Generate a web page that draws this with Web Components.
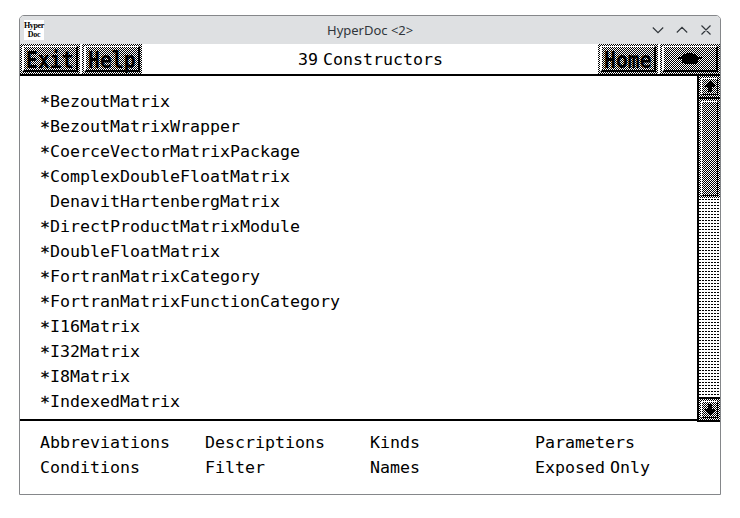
<!DOCTYPE html>
<html lang="en"><head><meta charset="utf-8"><title>HyperDoc</title>
<style>
html,body{margin:0;background:#fff}
body{width:740px;height:518px;overflow:hidden;--stipple:conic-gradient(#000 25%,#fff 0 50%,#000 0 75%,#fff 0) 0 0/2px 2px}
</style></head><body>
<hyper-window></hyper-window>
<script>
const make=(tag,html)=>customElements.define(tag,class extends HTMLElement{
  constructor(){super();const t=document.createElement('template');t.innerHTML=html;
    this.attachShadow({mode:'open'}).append(t.content.cloneNode(true));}
});

make('title-bar',`<style>
:host{display:grid;grid-template-columns:20px 1fr auto;align-items:center;height:28px;background:#dee0e2;padding:0 9px 0 4px;box-sizing:border-box;border-radius:4px 4px 0 0;color:#31363b;font:13px/28px "Noto Sans",sans-serif}
.icon{width:20px;height:20px;background:#fff;color:#000;font:bold 8px/9px "Liberation Serif",serif;text-align:center;display:flex;flex-direction:column;align-items:center;padding-top:1px;box-sizing:border-box;letter-spacing:-.35px}
.title{padding-left:283px;white-space:nowrap}
svg{display:block}
</style><div class="icon"><span>Hyper</span><span>Doc</span></div><div class="title"><slot></slot></div>
<svg width="59" height="12" fill="none" stroke="#31363b" stroke-width="1.15"><path d="M.8 3.5 6 8.7l5.2-5.2M24.8 8.5 30 3.3l5.2 5.2M49.5 1.5l9 9M58.5 1.5l-9 9"/></svg>`);

make('stipple-button',`<style>
:host{display:block;width:60px;height:30px;padding:2px;box-sizing:border-box;background:var(--stipple);flex:none}
.face{width:100%;height:100%;box-sizing:border-box;border-style:solid;border-width:var(--bevel,1px 2px 2px 2px);border-color:#fff #000 #000 #fff;display:flex;align-items:center;justify-content:center}
::slotted(span){font:bold 23.5px/20px "DejaVu Sans Mono",monospace;color:#000;transform:translate(-.5px,.5px) scaleX(.84)}
::slotted(svg){display:block;flex:none}
</style><div class="face"><slot></slot></div>`);

make('page-header',`<style>
:host{display:flex;height:30px;border-bottom:2px solid #000;gap:2px;color:#000}
.title{flex:1;padding-left:154px;font:16.61px/32px "DejaVu Sans Mono",monospace;word-spacing:-5px;white-space:nowrap}
</style><stipple-button><span>Exit</span></stipple-button><stipple-button><span>Help</span></stipple-button>
<div class="title"><slot></slot></div>
<stipple-button><span>Home</span></stipple-button>
<stipple-button><svg width="24" height="13"><path d="M8 1h7v1h2v1h2v1h1v1h4v2h-4v4h-2v1H6v-1H4V7H0V5h3V4h1V3h2V2h2z"/></svg></stipple-button>`);

make('scroll-bar',`<style>
:host{display:flex;flex-direction:column;width:21px;flex:none;border-left:2px solid #000;border-bottom:2px solid #000;height:344px;--bevel:1px}
stipple-button{width:21px;height:21px}
.thumb{height:99px;border-top:2px solid #000}
.thumb stipple-button{height:99px}
.track{flex:1;border-bottom:2px solid #000;background:linear-gradient(#fff 2px,transparent 2px) 0 2px/3px 3px,linear-gradient(90deg,#000 2px,#fff 2px) 0 0/3px 3px}
</style><stipple-button><svg width="10" height="11"><path d="M4 0h2v1h1v1h1v1h1v1h1v2H7v5H3V6H0V4h1V3h1V2h1V1h1z"/></svg></stipple-button>
<div class="thumb"><stipple-button></stipple-button></div><div class="track"></div>
<stipple-button><svg width="10" height="11"><path d="M3 0h4v5h3v2H9v1H8v1H7v1H6v1H4v-1H3V9H2V8H1V7H0V5h3z"/></svg></stipple-button>`);

make('list-entry',`<style>
:host{display:grid;grid-template-columns:10px 1fr;height:25px;line-height:25px;white-space:nowrap}
.mark{transform:translateY(1px);-webkit-text-stroke:.3px #000}
:host([plain]) .mark{visibility:hidden}
</style><span class="mark">*</span><span><slot></slot></span>`);

const names='BezoutMatrix BezoutMatrixWrapper CoerceVectorMatrixPackage ComplexDoubleFloatMatrix DenavitHartenbergMatrix DirectProductMatrixModule DoubleFloatMatrix FortranMatrixCategory FortranMatrixFunctionCategory I16Matrix I32Matrix I8Matrix IndexedMatrix'.split(' ');
make('constructor-list',`<style>
:host{display:block;flex:1;padding:13px 0 0 20px}
</style>${names.map(n=>`<list-entry${n.startsWith('Denavit')?' plain':''}>${n}</list-entry>`).join('')}`);

make('option-menu',`<style>
:host{display:grid;grid-template-columns:repeat(4,165px);grid-auto-rows:25px;padding:9px 0 0 20px;line-height:25px;word-spacing:-5px;white-space:nowrap}
</style><span>Abbreviations</span><span>Descriptions</span><span>Kinds</span><span>Parameters</span><span>Conditions</span><span>Filter</span><span>Names</span><span>Exposed Only</span>`);

make('hyper-window',`<style>
:host{display:block;margin:15px 0 0 19px;width:702px;height:480px;box-sizing:border-box;border:1px solid #85878a;border-radius:5px 5px 0 0;background:#fff;color:#000;font:16.61px "DejaVu Sans Mono",monospace}
.body{display:flex;height:343px;border-bottom:2px solid #000}
</style><title-bar>HyperDoc &lt;2&gt;</title-bar><page-header>39 Constructors</page-header>
<div class="body"><constructor-list></constructor-list><scroll-bar></scroll-bar></div><option-menu></option-menu>`);
</script></body></html>
